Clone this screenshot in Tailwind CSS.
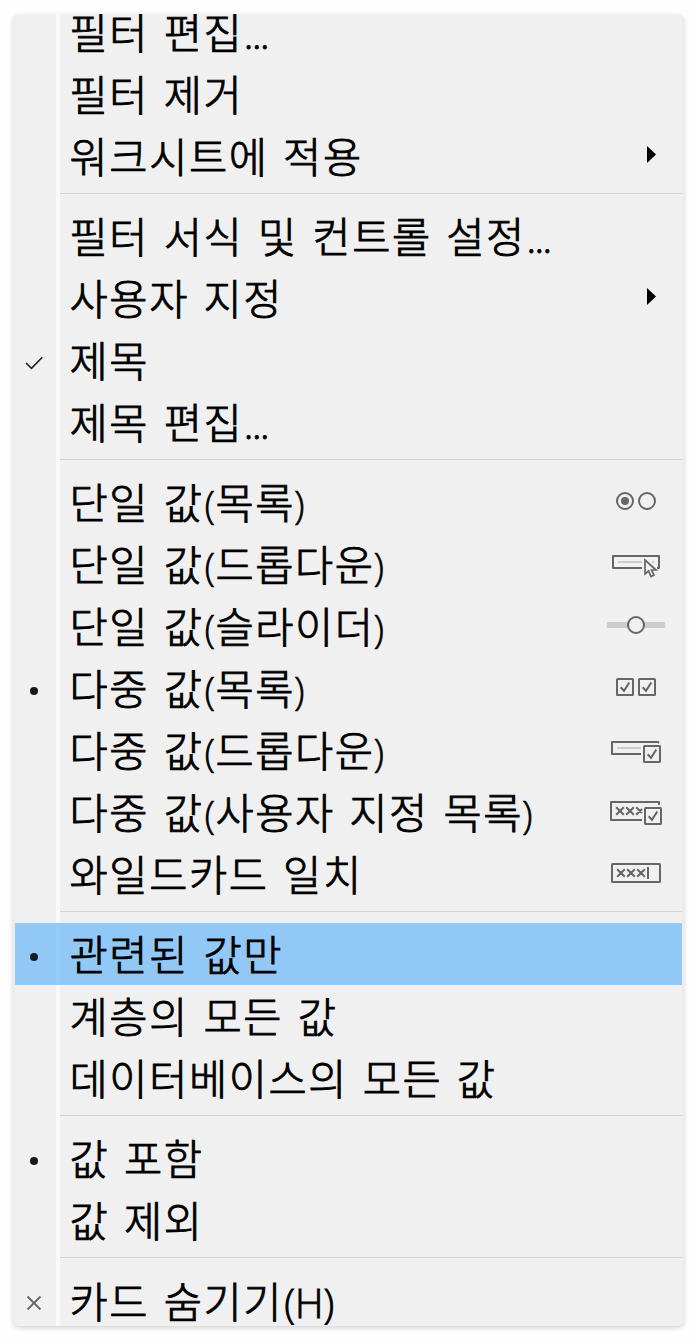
<!DOCTYPE html>
<html lang="ko">
<head>
<meta charset="utf-8">
<title>필터 메뉴</title>
<script src="https://cdn.jsdelivr.net/npm/@tailwindcss/browser@4"></script>
</head>
<body class="bg-[#fefefe] w-[698px] h-[1341px] overflow-hidden pt-[14px] pl-[13px]">
<div class="w-[671px] h-[1312px] rounded-[6px] bg-[#f0f0f0] overflow-hidden border-x-2 border-[#ececec] shadow-[0_2px_5px_rgba(0,0,0,0.17)] font-['Noto_Sans_CJK_KR',sans-serif] font-light text-[41.5px] leading-[60px] text-black [-webkit-text-stroke:0.9px_black] [word-spacing:1.4px] tracking-[1.6px] whitespace-nowrap">
<div class="-mt-[13px] bg-[linear-gradient(to_right,#f0f0f0_41px,#f9f9f9_41px,#f9f9f9_45px,#f0f0f0_45px)]">

<div class="h-[62px] pl-[54.6px]">필터 편집<span class="font-['Open_Sans'] text-[40px] tracking-[-1.5px] ml-[0.5px]">...</span></div>
<div class="h-[62px] pl-[54.6px]">필터 제거</div>
<div class="h-[62px] pl-[54.6px] pr-[26px] flex justify-between"><span>워크시트에 적용</span><svg class="w-[9px] h-[17px] mt-[21px]" viewBox="0 0 9 17"><path d="M0 0L9 8.5L0 17Z" stroke="none"/></svg></div>
<div class="h-[18px] pt-[6px] pl-[45px]"><div class="h-px bg-[#d5d5d5]"></div></div>

<div class="h-[62px] pl-[54.6px]">필터 서식 및 컨트롤 설정<span class="font-['Open_Sans'] text-[40px] tracking-[-1.5px] ml-[0.5px]">...</span></div>
<div class="h-[62px] pl-[54.6px] pr-[26px] flex justify-between"><span>사용자 지정</span><svg class="w-[9px] h-[17px] mt-[21px]" viewBox="0 0 9 17"><path d="M0 0L9 8.5L0 17Z" stroke="none"/></svg></div>
<div class="h-[62px] flex"><div class="w-[54.6px] pl-[10px] pt-[27px]"><svg class="w-[18px] h-[14px]" viewBox="0 0 18 14" fill="none" stroke="#222" stroke-width="1.6"><path d="M1 7L6.5 12.3L17.3 1.3"/></svg></div><span>제목</span></div>
<div class="h-[62px] pl-[54.6px]">제목 편집<span class="font-['Open_Sans'] text-[40px] tracking-[-1.5px] ml-[0.5px]">...</span></div>
<div class="h-[18px] pt-[6px] pl-[45px]"><div class="h-px bg-[#d5d5d5]"></div></div>

<div class="h-[62px] pl-[54.6px] pr-[14px] flex justify-between"><span>단일 값<span class="font-['Open_Sans'] text-[39px] ml-px tracking-[0.2px] [-webkit-text-stroke-width:0.6px]">(</span>목록<span class="font-['Open_Sans'] text-[39px] ml-[-1px] [-webkit-text-stroke-width:0.6px]">)</span></span>
<svg class="w-[64px] h-[62px]" viewBox="604 471 64 62" fill="none" stroke="#666" stroke-width="2"><circle cx="625" cy="501" r="8"/><circle cx="647" cy="501" r="8"/><circle cx="625" cy="501" r="4" fill="#666" stroke="none"/></svg></div>
<div class="h-[62px] pl-[54.6px] pr-[14px] flex justify-between"><span>단일 값<span class="font-['Open_Sans'] text-[39px] ml-px tracking-[0.2px] [-webkit-text-stroke-width:0.6px]">(</span>드롭다운<span class="font-['Open_Sans'] text-[39px] ml-[-1px] [-webkit-text-stroke-width:0.6px]">)</span></span>
<svg class="w-[64px] h-[62px]" viewBox="604 533 64 62" fill="none" stroke="#666" stroke-width="2"><path d="M642 568H613V556H659V568H657" stroke-linejoin="round"/><path d="M618 562H642M652 562H654" stroke="#ccc"/><path d="M645 560V574L648.5 571L651 576.5L654 575L651.5 570H656Z" fill="#f0f0f0" stroke-width="1.7"/></svg></div>
<div class="h-[62px] pl-[54.6px] pr-[14px] flex justify-between"><span>단일 값<span class="font-['Open_Sans'] text-[39px] ml-px tracking-[0.2px] [-webkit-text-stroke-width:0.6px]">(</span>슬라이더<span class="font-['Open_Sans'] text-[39px] ml-[-1px] [-webkit-text-stroke-width:0.6px]">)</span></span>
<svg class="w-[64px] h-[62px]" viewBox="604 595 64 62" fill="none" stroke="#666" stroke-width="2"><path d="M607 625H665" stroke="#ccc" stroke-width="6"/><circle cx="636" cy="625" r="8" fill="#f0f0f0"/></svg></div>
<div class="h-[62px] flex"><div class="w-[54.6px] pl-[15px] pt-[30px]"><div class="size-2 rounded-full bg-[#181818]"></div></div><div class="grow pr-[14px] flex justify-between"><span>다중 값<span class="font-['Open_Sans'] text-[39px] ml-px tracking-[0.2px] [-webkit-text-stroke-width:0.6px]">(</span>목록<span class="font-['Open_Sans'] text-[39px] ml-[-1px] [-webkit-text-stroke-width:0.6px]">)</span></span>
<svg class="w-[64px] h-[62px]" viewBox="604 657 64 62" fill="none" stroke="#666" stroke-width="2"><rect x="617" y="679" width="16" height="16" rx=".6"/><rect x="639" y="679" width="16" height="16" rx=".6"/><path d="M620.7 687.3L624 690.8L629.3 682.5M642.7 687.3L646 690.8L651.3 682.5"/></svg></div></div>
<div class="h-[62px] pl-[54.6px] pr-[14px] flex justify-between"><span>다중 값<span class="font-['Open_Sans'] text-[39px] ml-px tracking-[0.2px] [-webkit-text-stroke-width:0.6px]">(</span>드롭다운<span class="font-['Open_Sans'] text-[39px] ml-[-1px] [-webkit-text-stroke-width:0.6px]">)</span></span>
<svg class="w-[64px] h-[62px]" viewBox="604 719 64 62" fill="none" stroke="#666" stroke-width="2"><path d="M641 754H612V742H658L659 743" stroke-linejoin="round"/><path d="M617 748H641" stroke="#ccc"/><rect x="644" y="746" width="16" height="16" rx=".6"/><path d="M647.7 754.3L651 757.8L656.3 749.5"/></svg></div>
<div class="h-[62px] pl-[54.6px] pr-[14px] flex justify-between"><span>다중 값<span class="font-['Open_Sans'] text-[39px] ml-px tracking-[0.2px] [-webkit-text-stroke-width:0.6px]">(</span>사용자 지정 목록<span class="font-['Open_Sans'] text-[39px] ml-[-1px] [-webkit-text-stroke-width:0.6px]">)</span></span>
<svg class="w-[64px] h-[62px]" viewBox="604 781 64 62" fill="none" stroke="#666" stroke-width="2"><path d="M642 820H611V802H659V805" stroke-linejoin="round"/><path d="M616.2 807.2L623.8 814.8M623.8 807.2L616.2 814.8M626.2 807.2L633.8 814.8M633.8 807.2L626.2 814.8M636.2 807.2L642 813M642 809L636.2 814.8"/><rect x="645" y="808" width="16" height="16" rx=".6"/><path d="M648.7 816.3L652 819.8L657.3 811.5"/></svg></div>
<div class="h-[62px] pl-[54.6px] pr-[14px] flex justify-between"><span>와일드카드 일치</span>
<svg class="w-[64px] h-[62px]" viewBox="604 843 64 62" fill="none" stroke="#666" stroke-width="2"><rect x="612" y="864" width="48" height="18" rx=".6"/><path d="M617.2 869.2L624.8 876.8M624.8 869.2L617.2 876.8M627.2 869.2L634.8 876.8M634.8 869.2L627.2 876.8M637.2 869.2L644.8 876.8M644.8 869.2L637.2 876.8"/><path d="M648 867V879"/></svg></div>
<div class="h-[18px] pt-[6px] pl-[45px]"><div class="h-px bg-[#d5d5d5]"></div></div>

<div class="h-[62px] flex bg-[linear-gradient(to_right,#91c8f6_41px,#98ccf8_41px,#98ccf8_45px,#91c8f6_45px)]"><div class="w-[54.6px] pl-[15px] pt-[30px]"><div class="size-2 rounded-full bg-[#141c24]"></div></div><span>관련된 값만</span></div>
<div class="h-[62px] pl-[54.6px]">계층의 모든 값</div>
<div class="h-[62px] pl-[54.6px]">데이터베이스의 모든 값</div>
<div class="h-[18px] pt-[6px] pl-[45px]"><div class="h-px bg-[#d5d5d5]"></div></div>

<div class="h-[62px] flex"><div class="w-[54.6px] pl-[15px] pt-[30px]"><div class="size-2 rounded-full bg-[#181818]"></div></div><span>값 포함</span></div>
<div class="h-[62px] pl-[54.6px]">값 제외</div>
<div class="h-[18px] pt-[6px] pl-[45px]"><div class="h-px bg-[#d5d5d5]"></div></div>

<div class="h-[62px] flex"><div class="w-[54.6px] pl-[11px] pt-[26px]"><svg class="size-4" viewBox="0 0 16 16" stroke="#666" stroke-width="1.8"><path d="M1.5 1.5L14.5 14.5M14.5 1.5L1.5 14.5"/></svg></div><span class="relative top-px">카드 숨기기<span class="font-['Open_Sans'] text-[39.5px] tracking-[0.1px] ml-px">(H)</span></span></div>
</div>
</div>
</body>
</html>
